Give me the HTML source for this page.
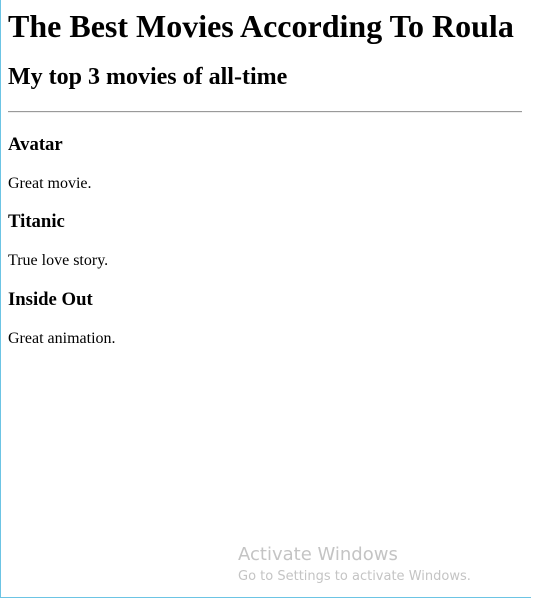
<!DOCTYPE html>
<html><head><meta charset="utf-8"><style>
html,body{margin:0;padding:0;background:#fff;}
#f{position:absolute;left:0;top:0;width:530px;height:597px;border-left:1px solid #6cc4e4;border-bottom:1px solid #6cc4e4;}
#c{position:absolute;left:8px;top:8px;width:514px;font-family:"Liberation Serif",serif;color:#000;}
h1{font-size:32px;margin:0 0 18px;line-height:37px;}
h2{font-size:24px;margin:0;line-height:28px;}
hr{margin:20px 0 0;border:0;border-top:1px solid #9a9a9a;border-bottom:1px solid #eee;height:0;}
h3{font-size:18.72px;margin:18.72px 0;line-height:22px;}
h3.first{margin-top:21px;}
p{font-size:16px;margin:16px 0;line-height:18px;}
.w{position:absolute;left:238px;font-family:"DejaVu Sans","Liberation Sans",sans-serif;color:#c4c4c4;}
</style></head><body>
<div id="f"></div>
<div id="c">
<h1>The Best Movies According To Roula</h1>
<h2>My top 3 movies of all-time</h2>
<hr>
<h3 class="first">Avatar</h3><p>Great movie.</p>
<h3>Titanic</h3><p>True love story.</p>
<h3>Inside Out</h3><p>Great animation.</p>
</div>
<div class="w" style="top:544px;font-size:18px;">Activate Windows</div>
<div class="w" style="top:569px;font-size:13px;">Go to Settings to activate Windows.</div>
</body></html>
